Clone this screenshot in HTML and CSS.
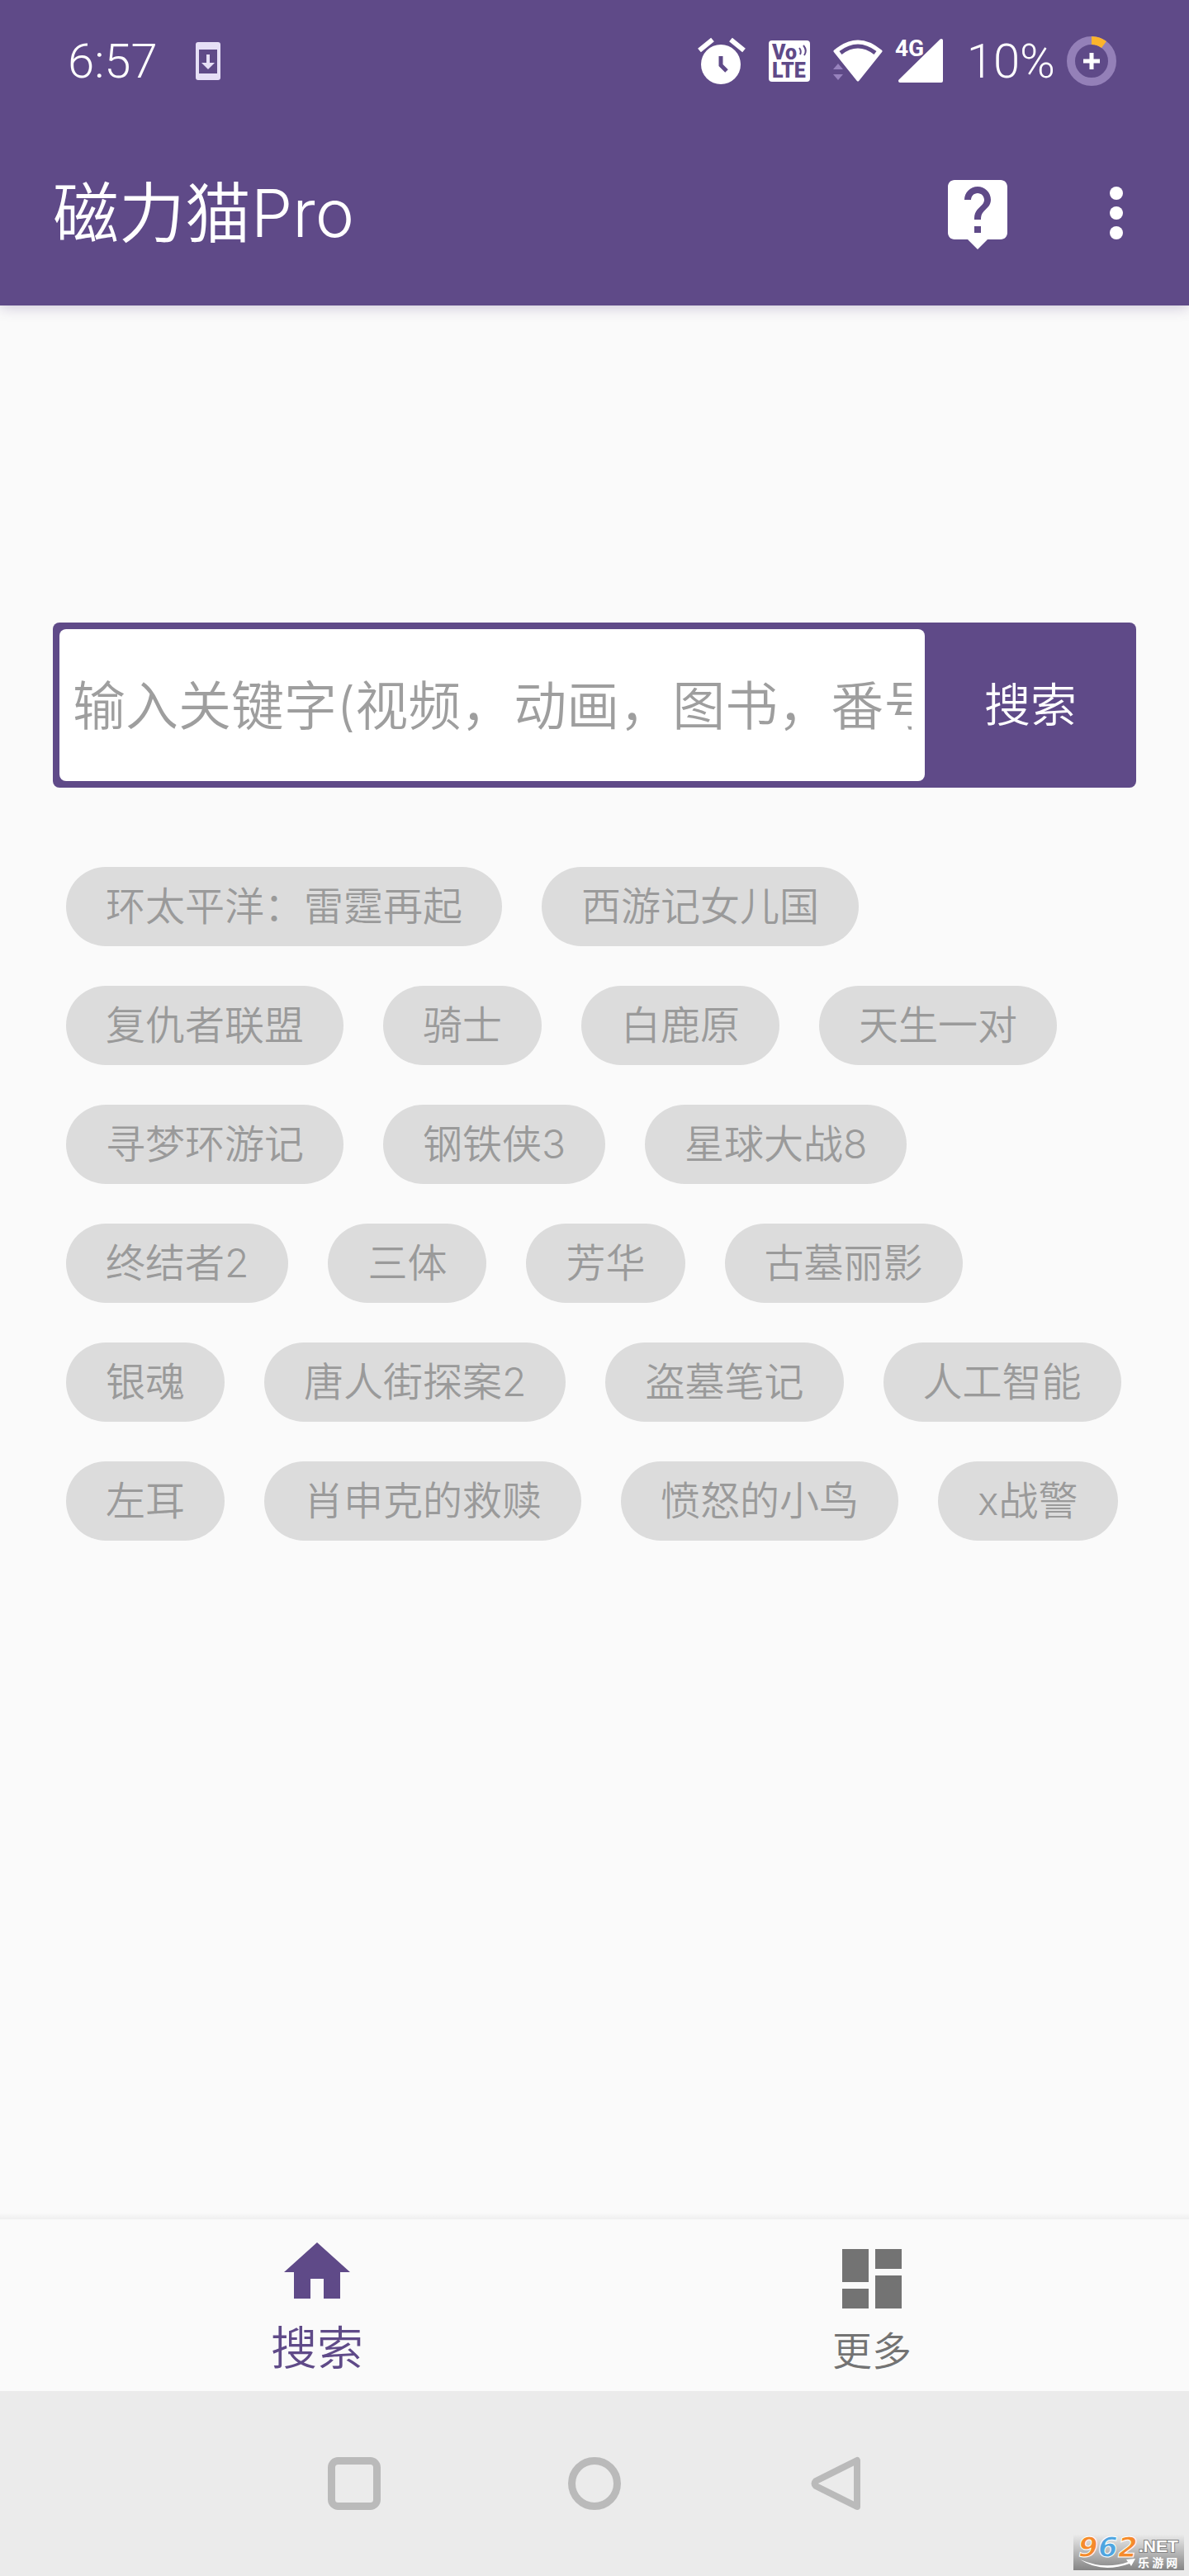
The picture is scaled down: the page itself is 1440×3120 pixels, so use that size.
FILE: index.html
```html
<!DOCTYPE html>
<html lang="zh-CN">
<head>
<meta charset="utf-8">
<meta name="viewport" content="width=device-width, initial-scale=1">
<title>磁力猫Pro</title>
<link rel="stylesheet" href="styles.css">
</head>
<body>
<header class="header">
  <div class="status">
    <div class="status-group">
      <span class="status-text">6:57</span>
      <svg class="icon-update" viewBox="0 0 30 46" width="30" height="46" aria-hidden="true">
        <path fill="#e6dff6" fill-rule="evenodd" d="M3 0h24a3 3 0 0 1 3 3v40a3 3 0 0 1-3 3H3a3 3 0 0 1-3-3V3a3 3 0 0 1 3-3zM4 9v29h22V9zM13 15h4v10h6l-8 8-8-8h6z"/>
      </svg>
    </div>
    <div class="status-group">
      <svg viewBox="0 0 58 56" width="58" height="56" aria-hidden="true">
        <g fill="none" stroke="#fff" stroke-width="6"><path d="M2 15 18 2M40 2l16 13"/></g>
        <circle cx="28" cy="32" r="24" fill="#fff"/>
        <path d="M28 22v11l7 7" fill="none" stroke="#5f4a88" stroke-width="5"/>
      </svg>
      <svg viewBox="0 0 50 50" width="50" height="50" aria-hidden="true">
        <rect width="50" height="50" rx="4" fill="#fff"/>
        <g class="volte"><text x="4" y="23">Vo</text><text x="4" y="45">LTE</text></g>
        <path d="M37 9q3 4 1 8M42 6q5 6 1 12" fill="none" stroke="#5f4a88" stroke-width="2"/>
      </svg>
      <svg viewBox="0 0 134 56" width="134" height="56" aria-hidden="true">
        <path d="M2 16Q30-8 58 16L30 51z" fill="#fff" stroke="#fff" stroke-width="3" stroke-linejoin="round"/>
        <path d="M9 18Q30 2 51 18" fill="none" stroke="#5f4a88" stroke-width="5"/>
        <path d="M0 38l6-7 6 7zM0 44h12l-6 7z" fill="#9782bd"/>
        <path d="M131 3v49H81z" fill="#fff" stroke="#fff" stroke-width="4" stroke-linejoin="round"/>
        <path d="M72 0h37v14l-12 11H72z" fill="#5f4a88"/>
        <text class="network" x="75" y="22">4G</text>
      </svg>
      <span class="status-text">10%</span>
      <svg class="icon-battery" viewBox="0 0 60 60" width="60" height="60" aria-hidden="true">
        <circle cx="30" cy="30" r="25" fill="none" stroke="#9480b8" stroke-width="10"/>
        <path d="M30 5a25 25 0 0 1 15 5" fill="none" stroke="#fcb42c" stroke-width="10"/>
        <path d="M30 20v20M20 30h20" stroke="#fff" stroke-width="5"/>
      </svg>
    </div>
  </div>
  <div class="appbar">
    <h1 class="title">磁力猫Pro</h1>
    <div class="actions">
      <button class="icon-button" type="button" aria-label="帮助">
        <svg viewBox="0 0 24 24" width="96" height="96" fill="#fff"><path d="M19 2H5c-1.11 0-2 .9-2 2v14c0 1.1.89 2 2 2h4l3 3 3-3h4c1.1 0 2-.9 2-2V4c0-1.1-.9-2-2-2zm-6 16h-2v-2h2v2zm2.070-7.750l-.9.920C13.450 11.900 13 12.500 13 14h-2v-.5c0-1.100.450-2.100 1.170-2.830l1.240-1.260c.370-.360.590-.860.590-1.410 0-1.100-.9-2-2-2s-2 .9-2 2H8c0-2.210 1.790-4 4-4s4 1.790 4 4c0 .880-.360 1.680-.930 2.250z"/></svg>
      </button>
      <button class="icon-button" type="button" aria-label="更多选项">
        <svg viewBox="0 0 24 24" width="96" height="96" fill="#fff"><circle cx="12" cy="6" r="2"/><circle cx="12" cy="12" r="2"/><circle cx="12" cy="18" r="2"/></svg>
      </button>
    </div>
  </div>
</header>

<main class="main">
  <form class="search">
    <input class="search-input" type="text" aria-label="关键字" placeholder="输入关键字(视频，动画，图书，番号">
    <button class="search-button" type="button">搜索</button>
  </form>
  <div class="chips">
    <button class="chip" type="button">环太平洋：雷霆再起</button>
    <button class="chip" type="button">西游记女儿国</button>
    <button class="chip" type="button">复仇者联盟</button>
    <button class="chip" type="button">骑士</button>
    <button class="chip" type="button">白鹿原</button>
    <button class="chip" type="button">天生一对</button>
    <button class="chip" type="button">寻梦环游记</button>
    <button class="chip" type="button">钢铁侠3</button>
    <button class="chip" type="button">星球大战8</button>
    <button class="chip" type="button">终结者2</button>
    <button class="chip" type="button">三体</button>
    <button class="chip" type="button">芳华</button>
    <button class="chip" type="button">古墓丽影</button>
    <button class="chip" type="button">银魂</button>
    <button class="chip" type="button">唐人街探案2</button>
    <button class="chip" type="button">盗墓笔记</button>
    <button class="chip" type="button">人工智能</button>
    <button class="chip" type="button">左耳</button>
    <button class="chip" type="button">肖申克的救赎</button>
    <button class="chip" type="button">愤怒的小鸟</button>
    <button class="chip" type="button">x战警</button>
  </div>
</main>

<nav class="tabs">
  <a class="tab tab-active" href="#search">
    <svg viewBox="0 0 24 24" width="96" height="96" fill="currentColor" aria-hidden="true"><path d="M10 20v-6h4v6h5v-8h3L12 3 2 12h3v8z"/></svg>
    <span>搜索</span>
  </a>
  <a class="tab" href="#more">
    <svg viewBox="0 0 24 24" width="96" height="96" fill="currentColor" aria-hidden="true"><path d="M3 13h8V3H3v10zm0 8h8v-6H3v6zm10 0h8V11h-8v10zm0-18v6h8V3h-8z"/></svg>
    <span>更多</span>
  </a>
</nav>

<footer class="system">
  <button class="icon-button" type="button" aria-label="最近任务">
    <svg viewBox="0 0 64 64" width="64" height="64" fill="none" stroke="#bababa" stroke-width="9"><rect x="4.500" y="4.500" width="55" height="55" rx="8"/></svg>
  </button>
  <button class="icon-button" type="button" aria-label="主屏幕">
    <svg viewBox="0 0 64 64" width="64" height="64" fill="none" stroke="#bababa" stroke-width="9"><circle cx="32" cy="32" r="27.500"/></svg>
  </button>
  <button class="icon-button" type="button" aria-label="返回">
    <svg viewBox="0 0 64 64" width="64" height="64" fill="none" stroke="#bababa" stroke-width="8" stroke-linejoin="round"><path d="M59 4v56L9 35q-3-3 0-6z"/></svg>
  </button>
  <svg class="watermark" viewBox="0 0 134 46" width="134" height="46" role="img" aria-label="962.NET 乐游网">
    <defs><linearGradient id="plate" x1="0" y1="0" x2="0" y2="1"><stop offset="0" stop-color="#ececec"/><stop offset="1" stop-color="#858585"/></linearGradient></defs>
    <rect y="1" width="134" height="44" fill="url(#plate)"/>
    <path d="M8 32q30 13 58 3l-2-3 11-1-5 9-2-3Q34 49 8 32z" fill="#fff"/>
    <g class="mark-number"><text x="6" y="29" fill="#f58a2c">9</text><text x="30" y="29" fill="#4fa5e0">6</text><text x="54" y="29" fill="#f58a2c">2</text></g>
    <text class="mark-net" x="79" y="23">.NET</text>
    <text class="mark-name" x="78" y="41">乐 游 网</text>
  </svg>
</footer>
</body>
</html>
```
FILE: styles.css
```css
* {
  box-sizing: border-box;
}

body {
  --purple: #5f4a88;
  margin: 0;
  min-height: 100vh;
  display: flex;
  flex-direction: column;
  background: #fafafa;
  font-family: Inter, "Noto Sans CJK SC DemiLight", "Noto Sans CJK SC", sans-serif;
  font-weight: 350;
}

button {
  border: 0;
  margin: 0;
  padding: 0;
  background: none;
  font: inherit;
}

svg {
  display: block;
  flex: none;
  overflow: visible;
}

.header {
  background: var(--purple);
  color: #fff;
  box-shadow: 0 2px 16px rgba(95, 74, 136, 0.3);
}

.status {
  height: 146px;
  padding: 2px 88px 0 82px;
  display: flex;
  align-items: center;
  justify-content: space-between;
}

.status-group {
  display: flex;
  align-items: center;
  gap: 28px;
}

.status-text {
  font-family: Roboto, sans-serif;
  font-size: 58px;
  font-weight: 300;
  line-height: 64px;
}

.icon-update {
  margin-left: 18px;
}

.icon-battery {
  margin-left: -14px;
}

.volte {
  font: 900 25px Roboto, sans-serif;
  fill: var(--purple);
}

.network {
  font: 700 28px Roboto, sans-serif;
  fill: #fff;
}

.appbar {
  height: 224px;
  padding: 0 40px 0 64px;
  display: flex;
  align-items: center;
  justify-content: space-between;
}

.title {
  margin: 0;
  font-size: 80px;
  font-weight: inherit;
  line-height: 112px;
}

.actions {
  display: flex;
  gap: 72px;
}

.main {
  flex: 1;
  padding: 384px 64px 96px;
}

.search {
  display: flex;
  height: 200px;
  padding: 8px 0 8px 8px;
  border-radius: 8px;
  background: var(--purple);
}

.search-input {
  flex: 1;
  min-width: 0;
  padding: 0 16px;
  border: 0;
  border-radius: 8px;
  background: #fff;
  color: #333;
  font: inherit;
  font-size: 64px;
}

.search-input::placeholder {
  color: #9e9e9e;
  opacity: 1;
}

.search-button {
  width: 256px;
  color: #fff;
  font-size: 56px;
  line-height: 96px;
}

.chips {
  display: flex;
  flex-wrap: wrap;
  gap: 48px;
  margin-top: 96px;
  padding: 0 16px;
}

.chip {
  height: 96px;
  padding: 0 48px;
  border-radius: 48px;
  background: #dcdcdc;
  color: #9a9a9a;
  font-size: 48px;
  line-height: 96px;
  white-space: nowrap;
}

.tabs {
  display: flex;
  height: 216px;
  padding: 8px 48px 0;
  background: linear-gradient(#fafafa, #efefef 8px, #fafafa 8px);
}

.tab {
  flex: 1;
  display: flex;
  flex-direction: column;
  align-items: center;
  padding-top: 24px;
  color: #737373;
  font-size: 48px;
  line-height: 80px;
  text-decoration: none;
}

.tab-active {
  padding-top: 16px;
  color: var(--purple);
  font-size: 56px;
  line-height: 88px;
}

.system {
  position: relative;
  display: flex;
  align-items: center;
  justify-content: center;
  gap: 227px;
  height: 224px;
  background: #ebebeb;
}

.watermark {
  position: absolute;
  right: 6px;
  bottom: 6px;
}

.mark-number {
  font: italic 700 34px "DejaVu Sans", sans-serif;
  stroke: #fff;
  stroke-width: 1px;
}

.mark-net {
  font: 700 21px "Liberation Sans", sans-serif;
  fill: #fff;
  stroke: #808080;
  stroke-width: 2px;
  paint-order: stroke;
}

.mark-name {
  font: 700 14px "Noto Sans CJK SC", sans-serif;
  fill: #fff;
}
```
